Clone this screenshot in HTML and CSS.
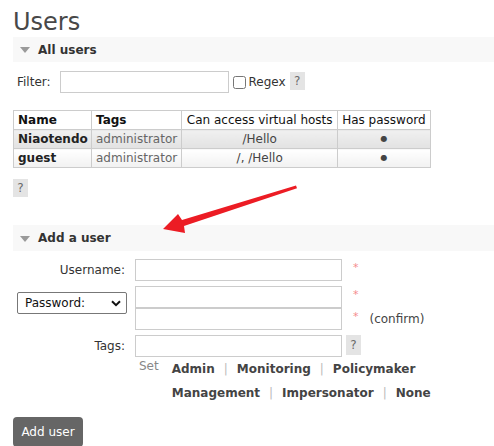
FILE: index.html
```html
<!DOCTYPE html>
<html>
<head>
<meta charset="utf-8">
<link rel="stylesheet" href="styles.css">
</head>
<body>
<div class="page">
  <h1 class="title">Users</h1>
  <div class="section-head"><span class="tri"></span><span>All users</span></div>
  <div class="filter-row">
    <span class="filter-label">Filter:</span>
    <input class="filter-input" type="text">
    <input class="regex-box" type="checkbox">
    <span class="regex-label">Regex</span>
    <span class="help">?</span>
  </div>
  <table class="users">
    <tr class="head">
      <th class="c-name">Name</th>
      <th class="c-tags">Tags</th>
      <th class="c-vh norm">Can access virtual hosts</th>
      <th class="c-pw norm">Has password</th>
    </tr>
    <tr class="alt1">
      <td class="name">Niaotendo</td>
      <td class="tags">administrator</td>
      <td class="center">/Hello</td>
      <td class="center dot">●</td>
    </tr>
    <tr class="alt2">
      <td class="name">guest</td>
      <td class="tags">administrator</td>
      <td class="center">/, /Hello</td>
      <td class="center dot">●</td>
    </tr>
  </table>
  <div class="help-row"><span class="help">?</span></div>

  <div class="section-head add-head"><span class="tri"></span><span>Add a user</span></div>

  <div class="form">
    <div class="lbl">Username:</div>
    <input class="field" type="text">
    <div class="extra"><span class="star">*</span></div>

    <div class="lbl sel-cell">
      <div class="sel-wrap">
        <select class="sel"><option>Password:</option></select>
        <svg class="chev" width="10" height="7" viewBox="0 0 10 7"><path d="M1 1.2 L5 5.2 L9 1.2" fill="none" stroke="#111" stroke-width="2"/></svg>
      </div>
    </div>
    <div class="stack">
      <input class="field" type="password">
      <input class="field" type="password">
    </div>
    <div class="stack">
      <div class="extra"><span class="star">*</span></div>
      <div class="extra"><span class="star">*</span><span class="confirm">(confirm)</span></div>
    </div>

    <div class="lbl">Tags:</div>
    <input class="field" type="text">
    <div class="extra"><span class="help tag-help">?</span></div>

    <div></div>
    <div class="tagset">
      <span class="set">Set</span>
      <div class="tag-links">
        <div class="tline"><b>Admin</b><span class="sep">|</span><b>Monitoring</b><span class="sep">|</span><b>Policymaker</b></div>
        <div class="tline"><b>Management</b><span class="sep">|</span><b>Impersonator</b><span class="sep">|</span><b>None</b></div>
      </div>
    </div>
    <div></div>
  </div>

  <button class="add-btn">Add user</button>

  <svg class="arrow" width="494" height="446" viewBox="0 0 494 446">
    <polygon points="296,185.6 297,188.2 184,226 185,233 163,229 178,214 182,220" fill="#ec1c24"/>
  </svg>
</div>
</body>
</html>
```

FILE: styles.css
```css
html, body {
  margin: 0;
  padding: 0;
  background: #fff;
}
body {
  font-family: "DejaVu Sans", Verdana, sans-serif;
  font-size: 12px;
  color: #484848;
  overflow: hidden;
}
.page {
  position: relative;
  padding-left: 13px;
  height: 446px;
}
.title {
  margin: 0;
  padding-top: 8px;
  height: 29px;
  font-size: 24px;
  line-height: 28px;
  font-weight: normal;
  color: #484848;
}
.section-head {
  height: 25px;
  background: #f8f8f8;
  display: flex;
  align-items: center;
  padding-left: 7px;
  font-weight: bold;
  color: #333;
}
.tri {
  width: 0;
  height: 0;
  border-left: 5px solid transparent;
  border-right: 5px solid transparent;
  border-top: 6px solid #9a9a9a;
  margin-right: 8px;
  margin-top: 1px;
}
.filter-row {
  margin-top: 9px;
  display: flex;
  align-items: center;
  padding-left: 4px;
  height: 22px;
}
.filter-label { color: #333; }
.filter-input {
  margin: 0 0 0 9px;
  width: 169px;
  height: 22px;
  box-sizing: border-box;
  border: 1px solid #ccc;
  padding: 0;
}
.regex-box {
  margin: 1px 0 0 4px;
  width: 13px;
  height: 13px;
}
.regex-label { margin-left: 3px; color: #333; }
.help {
  display: inline-flex;
  align-items: center;
  justify-content: center;
  width: 15px;
  height: 18px;
  background: #e4e4e4;
  color: #6a6a6a;
  font-size: 12px;
}
.filter-row .help { margin-left: 4px; margin-top: -2px; }
.users {
  margin-top: 17px;
  border-collapse: collapse;
  color: #444;
}
.users th, .users td {
  border: 1px solid #ccc;
  padding: 0 4px;
  height: 18px;
  line-height: 18px;
  white-space: nowrap;
  box-sizing: border-box;
}
.users th {
  text-align: left;
  font-weight: bold;
  color: #111;
  background: #fff;
}
.users th.norm { font-weight: normal; text-align: center; }
.users .c-name, .users td.name { padding-right: 1px; }
.c-name { width: 78px; }
.c-tags { width: 90px; }
.c-vh { width: 156px; }
.c-pw { width: 91px; }
.alt1 td { background: linear-gradient(#f0f0f0, #e2e2e2); }
.alt2 td { background: linear-gradient(#ffffff, #f1f1f1); }
.users td.name { font-weight: bold; color: #222; }
.users td.tags { color: #666; }
.users td.center { text-align: center; }
.users td.dot { font-size: 8px; color: #444; }
.help-row {
  margin-top: 11px;
  height: 18px;
}
.help-row .help { vertical-align: top; }
.add-head {
  margin-top: 28px;
  height: 26px;
}
.form {
  margin-top: 8px;
  padding-left: 4px;
  display: grid;
  grid-template-columns: 108px 207px auto;
  column-gap: 10px;
  row-gap: 5px;
  align-items: center;
}
.lbl {
  text-align: right;
  color: #333;
}
.field {
  width: 207px;
  height: 22px;
  box-sizing: border-box;
  border: 1px solid #ccc;
  margin: 0;
  padding: 0;
  display: block;
}
.stack {
  display: flex;
  flex-direction: column;
}
.extra {
  height: 22px;
  display: flex;
  align-items: center;
}
.star {
  color: #f58c8c;
  margin-left: 1px;
  position: relative;
  top: -3px;
  font-size: 11px;
}
.confirm {
  margin-left: 11px;
  color: #444;
}
.sel-cell {
  align-self: start;
  padding-top: 6px;
  text-align: left;
}
.sel-wrap {
  position: relative;
  width: 110px;
  margin-left: 0;
}
.sel {
  appearance: none;
  -webkit-appearance: none;
  width: 110px;
  height: 22px;
  border: 1px solid #777;
  border-radius: 2px;
  background: #fff;
  padding: 0 0 0 7px;
  font-family: "DejaVu Sans", Verdana, sans-serif;
  font-size: 12px;
  color: #111;
  display: block;
}
.chev {
  position: absolute;
  right: 6px;
  top: 8px;
}
.tag-help {
  margin-left: -6px;
  height: 20px;
  margin-top: -2px;
}
.tagset {
  display: flex;
  align-items: flex-start;
  margin-top: -5px;
  grid-column: 2 / 4;
  padding-left: 4px;
}
.set {
  color: #888;
  line-height: 24px;
  position: relative;
  top: -3px;
}
.tag-links {
  margin-left: 13px;
}
.tline {
  line-height: 24px;
  white-space: nowrap;
}
.tline b { color: #444; }
.sep {
  color: #bbb;
  margin: 0 9px;
}
.add-btn {
  display: block;
  margin-top: 7px;
  width: 70px;
  height: 30px;
  border: none;
  border-radius: 4px;
  background: #666;
  color: #fff;
  font-family: "DejaVu Sans", Verdana, sans-serif;
  font-size: 12px;
  padding: 0;
}
.arrow {
  position: absolute;
  left: 0;
  top: 0;
  pointer-events: none;
}
```
